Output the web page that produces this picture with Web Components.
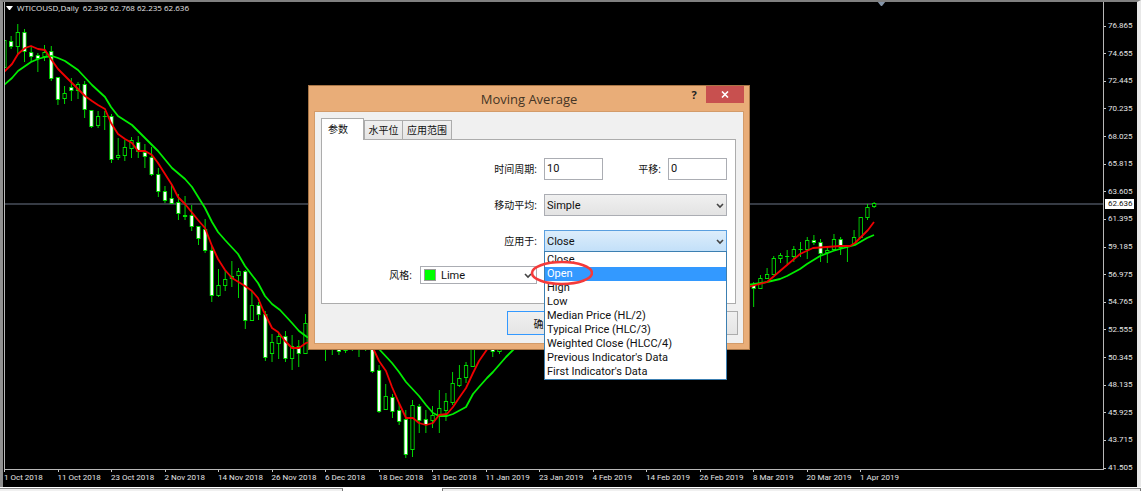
<!DOCTYPE html>
<html lang="zh-CN">
<head>
<meta charset="utf-8">
<title>WTICOUSD,Daily</title>
<style>
html, body { height: 100%; margin: 0; background: #f0f0f0; overflow: hidden; font-family: "Open Sans", "Noto Sans CJK SC", sans-serif; }
</style>
</head>
<body>
<trade-desk></trade-desk>
<script>
const define = (name, html, setup) => customElements.define(name, class extends HTMLElement {
  constructor() {
    super();
    const t = document.createElement('template');
    t.innerHTML = html;
    this.attachShadow({ mode: 'open' }).append(t.content.cloneNode(true));
  }
  connectedCallback() { if (setup) setup(this.shadowRoot, this); }
});

/* index, high, low, body top, body bottom, 1 = falling (filled) */
const candles = [
[0,37,68,40,68,0],[1,36,49,41,47,1],[2,24,55,32,47,0],[3,29,62,32,52,1],[4,46,62,52,57,1],[5,53,72,55,59,1],[6,45,61,52,57,0],[7,46,81,51,79,1],
[8,77,105,77,100,1],[9,86,104,93,99,0],[10,78,101,87,91,1],[11,82,99,84,91,0],[12,81,118,84,110,1],[13,110,128,110,127,1],[14,111,128,116,126,0],[15,111,130,116,117,0],
[16,114,163,116,160,1],[17,138,160,155,158,0],[18,140,161,147,156,0],[19,137,158,140,149,0],[20,136,158,142,152,1],[21,144,168,152,157,1],[22,147,176,157,175,1],[23,168,197,174,192,1],
[24,186,203,191,201,1],[25,185,204,198,204,1],[26,194,220,202,214,1],[27,196,220,215,217,0],[28,205,231,215,227,1],[29,226,245,226,239,1],[30,219,253,229,251,1],[31,246,302,250,296,1],
[32,269,297,285,296,0],[33,270,291,279,286,0],[34,261,287,276,279,0],[35,268,298,271,276,0],[36,270,329,271,321,1],[37,291,321,305,321,0],[38,302,320,305,315,1],[39,311,361,314,358,1],
[40,334,362,342,354,0],[41,332,359,336,344,0],[42,331,362,336,359,1],[43,335,370,346,359,0],[44,340,367,346,354,1],[45,314,354,323,354,0],[48,340,361,340,341,0],[49,340,355,340,341,0],
[50,340,355,345,352,1],[51,340,353,340,351,1],[52,340,351,340,341,0],[53,340,357,340,341,0],[54,340,351,340,341,0],[55,340,373,340,372,1],[56,365,413,370,412,1],[57,384,410,396,410,0],
[58,394,418,397,412,1],[59,403,425,410,422,1],[60,410,458,419,455,1],[61,400,457,405,450,0],[62,404,433,406,421,1],[63,410,433,419,425,1],[64,406,428,415,421,0],[65,390,433,408,416,0],
[66,393,421,401,411,0],[67,372,405,383,403,0],[68,365,387,378,386,0],[69,362,383,365,378,0],[70,340,367,340,367,0],[73,340,357,345,352,1],[74,340,354,345,352,0],
[112,282,307,284,289,1],[113,275,289,278,289,0],[114,268,279,274,279,0],[115,256,275,258,275,0],[116,253,263,255,259,0],[117,250,264,256,257,0],[118,246,262,249,257,0],[119,242,257,249,250,0],
[120,237,259,240,250,0],[121,235,245,240,243,1],[122,239,262,242,254,1],[123,247,263,250,253,0],[124,234,251,239,250,0],[125,237,255,239,248,1],[126,245,262,246,247,0],[127,230,245,237,245,0],
[128,217,238,217,238,0],[129,204,220,207,218,0],[130,202,208,203,207,0]];

define('price-plot', `
<style>
:host { display: block; min-width: 0; min-height: 0; background: #000; border: 1px solid #b8b8b8; border-top: 0; box-sizing: border-box; }
svg { display: block; width: 100%; height: 100%; }
</style>
<svg viewBox="5 2 1098 467" preserveAspectRatio="none" role="img" aria-label="WTICOUSD daily candlestick chart with two moving averages">
  <rect x="4" y="203" width="1100" height="2" fill="#363b44"/>
  <g id="candles" transform="translate(4 0) scale(.83625 1)"></g>
  <g fill="none" stroke-width="1.8" stroke-linejoin="round">
    <g stroke="#0e0">
      <path d="M4 85L12 78L18 71L31 62L38 59L45 57L52 56L58 58L65 61L78 70L92 85L105 97L111 107L118 116L132 125L145 138L158 151L172 168L185 179L192 187L205 208L212 222L218 232L225 240L238 254L245 266L258 283L265 296L272 304L280 310L292 323L299 331L307 337L318 340"/>
      <path d="M379 349L392 363L399 372L406 382L419 396L426 405L433 413L439 416L447 416L453 414L466 407L473 394L479 387L487 378L493 372L506 357L515 348"/>
      <path d="M748 285L767 282L780 279L787 276L800 269L807 264L820 256L833 251L840 249L855 245L867 238L874 235"/>
    </g>
    <g stroke="#f00000">
      <path d="M4 72L12 64L18 54L25 48L31 46L38 49L45 50L51 59L58 69L71 82L78 89L85 96L92 101L98 105L105 109L111 123L118 134L125 139L132 143L138 151L145 151L152 155L158 163L172 185L178 197L185 204L198 220L205 228L212 246L218 259L225 270L232 278L245 286L252 291L258 298L263 310L272 328L278 332L285 341L292 348L299 348L306 343L318 340"/>
      <path d="M373 348L379 361L386 371L392 387L399 403L406 418L413 418L419 423L426 425L433 423L439 415L447 414L453 407L459 398L466 388L473 373L479 361L488 348"/>
      <path d="M748 287L767 282L773 277L787 265L800 254L813 248L840 246L850 246L855 243L868 230L874 222"/>
    </g>
  </g>
  <path d="M877 1h9l-4 5h-1z" fill="#8494a8"/>
</svg>`, root => {
  root.getElementById('candles').innerHTML = candles.map(([i, hi, lo, a, b, down]) => {
    const x = 8 * i;
    let s = `<rect x="${x}" y="${hi}" width="1" height="${lo - hi}" fill="#0f0"/>`;
    s += `<rect x="${x - 2}" y="${a}" width="5" height="${b - a}" fill="#00e000"/>`;
    if (b - a > 2) s += `<rect x="${x - 1}" y="${a + 1}" width="3" height="${b - a - 2}" fill="${down ? '#fff' : '#000'}"/>`;
    return s;
  }).join('');
});

define('price-axis', `
<style>
:host { display: block; position: relative; color: #e4e4e4; font: 8px/12px Roboto, sans-serif; }
ol { list-style: none; margin: 0; padding: 18px 0 0; height: 100%; box-sizing: border-box; display: flex; flex-direction: column; justify-content: space-between; }
li { display: flex; align-items: center; gap: 2px; }
li::before { content: ""; width: 2px; height: 1px; background: #c8c8c8; }
output { position: absolute; top: 197px; left: 1px; right: 3px; padding-left: 3px; height: 10px; line-height: 10px; background: #fff; color: #111; }
</style>
<ol></ol><output>62.636</output>`, root => {
  root.querySelector('ol').innerHTML = Array.from({ length: 17 }, (_, i) => `<li>${(76.865 - i * 2.21).toFixed(3)}</li>`).join('');
});

define('date-axis', `
<style>
:host { display: block; color: #e4e4e4; font: 8px/12px Roboto, sans-serif; }
ol { list-style: none; margin: 0; padding: 0; display: grid; grid-template-columns: repeat(17, minmax(0, 107fr)) 381fr; }
li { white-space: nowrap; }
li::before { content: ""; display: block; width: 1px; height: 2px; background: #c8c8c8; }
</style>
<ol></ol>`, root => {
  root.querySelector('ol').innerHTML = ['1 Oct 2018','11 Oct 2018','23 Oct 2018','2 Nov 2018','14 Nov 2018','26 Nov 2018','6 Dec 2018','18 Dec 2018','31 Dec 2018','11 Jan 2019','23 Jan 2019','4 Feb 2019','14 Feb 2019','26 Feb 2019','8 Mar 2019','20 Mar 2019','1 Apr 2019'].map(d => `<li>${d}</li>`).join('');
});

define('chart-window', `
<style>
:host { display: grid; min-height: 0; grid-template: minmax(0, 1fr) 17px / minmax(0, 1fr) 33px; background: #000; border-top: 2px solid #808080; border-left: 3px solid #909090; border-right: 4px solid #e8e8e8; padding-left: 1px; position: relative; }
header { position: absolute; top: 0; left: 3px; display: flex; align-items: center; gap: 4px; color: #e4e4e4; font-size: 8px; line-height: 12px; white-space: pre; }
svg { display: block; }
price-plot { grid-area: 1 / 1; }
price-axis { grid-area: 1 / 2; margin-bottom: -4px; }
date-axis { grid-area: 2 / 1; }
</style>
<price-plot></price-plot><price-axis></price-axis><date-axis></date-axis>
<header><svg width="7" height="4" aria-hidden="true"><path d="M0 0h7L4 4H3z" fill="#fff"/></svg><span>WTICOUSD,Daily  62.392 62.768 62.235 62.636</span></header>`);

define('choice-list', `
<style>
:host { display: block; background: #fff; border: 1px solid #3c7fb1; padding-top: 1px; color: #111; font: 11px/14px Roboto, sans-serif; }
ul { list-style: none; margin: 0; padding: 0; }
li { padding: 0 2px; height: 14px; white-space: nowrap; }
li[aria-selected=true] { background: #3399ff; color: #fff; }
</style>
<ul role="listbox" aria-label="应用于"></ul>`, root => {
  root.querySelector('ul').innerHTML = ['Close','Open','High','Low','Median Price (HL/2)','Typical Price (HLC/3)','Weighted Close (HLCC/4)',"Previous Indicator's Data","First Indicator's Data"].map((t, i) => `<li role="option" aria-selected="${i === 1}">${t}</li>`).join('');
});

define('average-form', `
<style>
:host { display: block; font-size: 10px; color: #111; }
form { display: grid; grid-template-columns: 1fr 59px 51px 59px; grid-template-rows: 22px 22px 22px 18px; gap: 14px 7px; align-items: center; padding: 18px 8px 19px 0; }
label { text-align: right; line-height: 16px; white-space: nowrap; }
input, select { box-sizing: border-box; width: 100%; height: 22px; margin: 0; border: 1px solid #abadb3; border-radius: 0; background: #fff; color: #111; font: 11px Roboto, sans-serif; padding: 0 2px; outline: 0; }
input { padding-bottom: 2px; }
select { appearance: none; }
.combo { position: relative; grid-column: span 3; }
.combo select { display: block; background: linear-gradient(#f0f0f0, #e3e3e3); }
.combo.open select { background: linear-gradient(#dcedfb, #c3e0f9); border-color: #5a9fdf; }
.arrow { position: absolute; right: 3px; top: 9px; pointer-events: none; }
choice-list { position: absolute; top: 21px; left: 0; right: 0; z-index: 2; }
.ring { position: absolute; left: -15px; top: 29px; z-index: 3; pointer-events: none; }
.style { display: flex; justify-content: flex-end; align-items: center; gap: 8px; }
.color { position: relative; width: 117px; box-sizing: border-box; height: 18px; border: 1px solid #abadb3; display: flex; align-items: center; padding-left: 3px; gap: 3px; }
.color i { flex: none; width: 10px; height: 10px; background: #0f0; border: 1px solid #9a9a9a; }
.color select { border: 0; height: 16px; }
.color .arrow { top: 6px; right: 4px; }
</style>
<form>
  <label for="period">时间周期:</label><input id="period" value="10">
  <label for="shift">平移:</label><input id="shift" value="0">
  <label for="method">移动平均:</label>
  <div class="combo"><select id="method"><option>Simple</option></select>
    <svg class="arrow" width="8" height="6" aria-hidden="true"><path d="M1 1l3 3 3-3" fill="none" stroke="#444" stroke-width="1.6"/></svg></div>
  <label for="apply">应用于:</label>
  <div class="combo open"><select id="apply"><option>Close</option></select>
    <svg class="arrow" width="8" height="6" aria-hidden="true"><path d="M1 1l3 3 3-3" fill="none" stroke="#444" stroke-width="1.6"/></svg>
    <choice-list></choice-list>
    <svg class="ring" width="64" height="28" aria-hidden="true"><ellipse cx="33" cy="14" rx="30" ry="11" fill="none" stroke="#f43a3a" stroke-width="2.6"/></svg></div>
  <div class="style"><label for="color">风格:</label>
    <div class="color"><i></i><select id="color"><option>Lime</option></select>
      <svg class="arrow" width="8" height="6" aria-hidden="true"><path d="M1 1l3 3 3-3" fill="none" stroke="#444" stroke-width="1.6"/></svg></div></div>
</form>`);

define('tab-panel', `
<style>
:host { display: block; }
nav { display: flex; align-items: flex-end; height: 21px; }
button { box-sizing: border-box; width: 39px; font: 10px "Noto Sans CJK SC", sans-serif; line-height: 16px; color: #111; margin: 0; padding: 0; height: 19px; border: 1px solid #acacac; border-bottom: 0; background: linear-gradient(#f0f0f0, #e5e5e5); white-space: nowrap; }
button + button + button { width: 49px; border-left: 0; }
button[aria-selected=true] { width: 43px; height: 22px; margin-bottom: -1px; background: #fff; text-align: left; padding: 0 6px 2px; position: relative; }
section { background: #fff; border: 1px solid #acacac; }
</style>
<nav role="tablist"><button role="tab" aria-selected="true">参数</button><button role="tab">水平位</button><button role="tab">应用范围</button></nav>
<section role="tabpanel"><slot></slot></section>`);

define('indicator-dialog', `
<style>
:host { display: block; box-sizing: border-box; background: #e9ad78; border: 1px solid #a87546; padding: 0 5px 5px; }
header { display: grid; grid-template-columns: 1fr auto 1fr; height: 25px; align-items: center; }
h1 { grid-column: 2; margin: 0; font-size: 13px; line-height: 24px; font-weight: 400; color: #453526; }
.tools { display: flex; justify-content: flex-end; align-self: start; }
.tools button { font: 700 11px "Open Sans", sans-serif; border: 0; padding: 0; width: 24px; height: 17px; background: none; color: #222; }
.tools .close { width: 38px; background: #c8504f; display: grid; place-items: center; }
.body { background: #f0f0f0; border: 1px solid #d39b69; padding: 6px 7px 8px 6px; }
footer { display: flex; justify-content: flex-end; gap: 3px; padding-top: 7px; margin-right: -2px; }
footer button { box-sizing: border-box; width: 75px; height: 24px; border: 1px solid #acacac; background: linear-gradient(#f0f0f0, #e5e5e5); font: 10px "Noto Sans CJK SC", sans-serif; color: #111; padding: 0 2px 0 0; }
footer .ok { border-color: #3399ff; }
</style>
<header><h1>Moving Average</h1><div class="tools"><button aria-label="Help">?</button><button class="close" aria-label="Close"><svg width="8" height="7" aria-hidden="true"><path d="M1 0.5l6 6M7 0.5L1 6.5" stroke="#fff" stroke-width="1.6"/></svg></button></div></header>
<div class="body"><tab-panel><average-form></average-form></tab-panel>
<footer><button class="ok">确定</button><button aria-label="Cancel"></button><button aria-label="Reset"></button></footer></div>`);

define('trade-desk', `
<style>
:host { display: grid; height: 100%; grid-template-rows: minmax(0, 1fr) 4px; position: relative; }
.tabs { display: grid; grid-template-columns: 343fr 99fr 699fr; background: #fff; padding-top: 1px; }
.tabs span { border-top: 1px solid #8c8c8c; border-right: 1px solid #777; background: #f0f0f0; }
.tabs span:nth-child(2) { border: 0; background: #fff; }
.tabs span:nth-child(3) { border-left: 1px solid #777; }
indicator-dialog { position: absolute; left: 308px; top: 85px; width: 442px; }
</style>
<chart-window></chart-window>
<div class="tabs"><span></span><span></span><span></span></div>
<indicator-dialog></indicator-dialog>`);
</script>
</body>
</html>
